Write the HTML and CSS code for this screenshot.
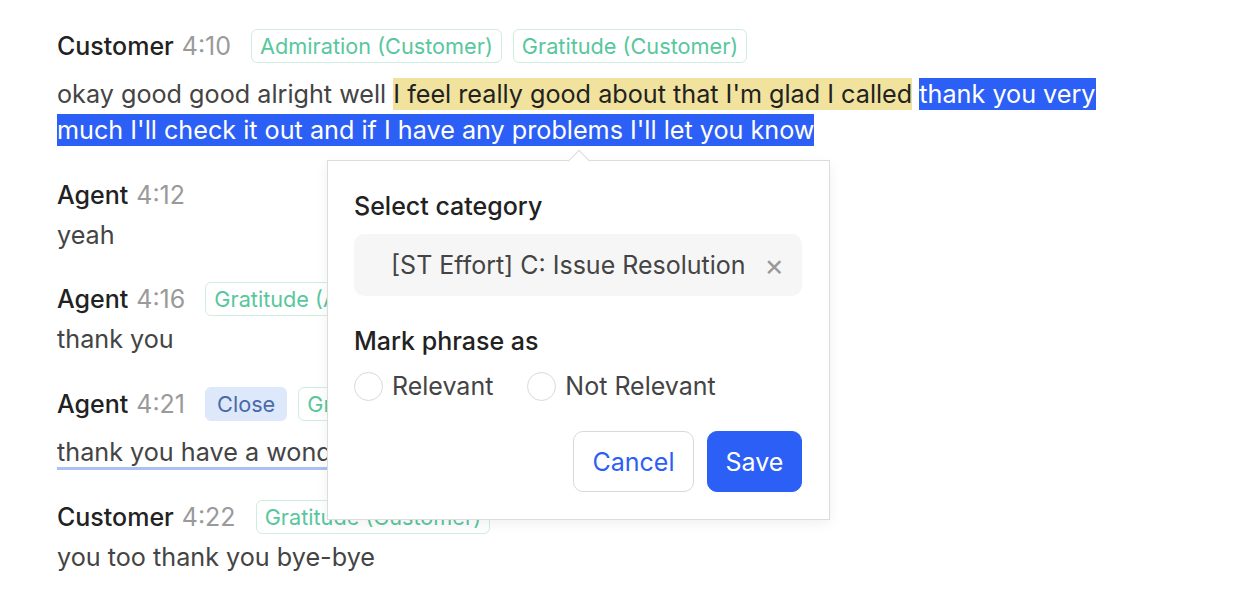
FILE: index.html
```html
<!DOCTYPE html>
<html>
<head>
<meta charset="utf-8">
<link rel="stylesheet" href="styles.css">
</head>
<body>
<div class="page">
  <div class="transcript">
    <div class="turn">
      <div class="head">
        <span class="who">Customer</span><span class="time">4:10</span>
        <span class="tags"><span class="tag">Admiration (Customer)</span><span class="tag">Gratitude (Customer)</span></span>
      </div>
      <p class="text marked">okay good good alright well <span class="hl">I feel really good about that I'm glad I called</span> <span class="sel">thank you very much I'll check it out and if I have any problems I'll let you know</span></p>
    </div>
    <div class="turn turn-plain">
      <div class="head"><span class="who">Agent</span><span class="time">4:12</span></div>
      <p class="text">yeah</p>
    </div>
    <div class="turn">
      <div class="head">
        <span class="who">Agent</span><span class="time">4:16</span>
        <span class="tags"><span class="tag">Gratitude (Agent)</span></span>
      </div>
      <p class="text">thank you</p>
    </div>
    <div class="turn">
      <div class="head">
        <span class="who">Agent</span><span class="time">4:21</span>
        <span class="tags"><span class="tag tag-close">Close</span><span class="tag">Gratitude (Agent)</span></span>
      </div>
      <p class="text marked"><span class="ul">thank you have a wonderful day</span></p>
    </div>
    <div class="turn">
      <div class="head">
        <span class="who">Customer</span><span class="time">4:22</span>
        <span class="tags"><span class="tag">Gratitude (Customer)</span></span>
      </div>
      <p class="text">you too thank you bye-bye</p>
    </div>
  </div>

  <div class="popover">
    <div class="field">
      <div class="label">Select category</div>
      <div class="select">
        <span class="select-value">[ST Effort] C: Issue Resolution</span>
        <span class="clear">×</span>
      </div>
    </div>
    <div class="field field-mark">
      <div class="label">Mark phrase as</div>
      <div class="radios">
        <label class="radio"><span class="dot"></span>Relevant</label>
        <label class="radio"><span class="dot"></span>Not Relevant</label>
      </div>
    </div>
    <div class="actions">
      <button class="btn btn-cancel">Cancel</button>
      <button class="btn btn-save">Save</button>
    </div>
  </div>
</div>
</body>
</html>
```

FILE: styles.css
```css
* { box-sizing: border-box; }
html, body { margin: 0; padding: 0; background: #fff; }
body {
  font-family: Inter, "Noto Sans", sans-serif;
  font-size: 25px;
  color: #444;
}
.page {
  position: relative;
  width: 1238px;
  height: 598px;
  overflow: hidden;
}
.transcript {
  padding: 28px 0 0 57px;
  width: 1137px;
}
.turn { margin-bottom: 29px; }
.turn-plain { margin-bottom: 28px; }
.head {
  display: flex;
  align-items: center;
  height: 36px;
}
.who { color: #222; font-weight: 500; }
.time { color: #9a9a9a; margin-left: 8px; }
.tags { display: flex; gap: 11px; margin-left: 20px; }
.tag {
  display: inline-flex;
  align-items: center;
  height: 34px;
  padding: 0 8px;
  border: 1px solid #cdeee0;
  border-radius: 6px;
  color: #58c79d;
  font-size: 21.7px;
}
.tag-close {
  background: #dde8fb;
  border-color: #dde8fb;
  color: #4a6aa8;
  padding: 0 11px;
}
.text {
  margin: 4px 0 0;
  line-height: 36px;
  font-size: 25.2px;
}
.text.marked { margin-top: 12px; }
.hl { background: #f1e29e; color: #222; padding: 1px 0; }
.sel { background: #2c5ff6; color: #fff; padding: 1px 0; }
.ul {
  border-bottom: 3px solid #aac1f1;
}

.popover {
  position: absolute;
  left: 327px;
  top: 160px;
  width: 503px;
  height: 360px;
  background: #fff;
  border: 1px solid #dcdcdc;
  box-shadow: 0 4px 12px rgba(0,0,0,0.06);
  padding: 29px 27px 27px 26px;
  display: flex;
  flex-direction: column;
}
.popover::before {
  content: "";
  position: absolute;
  top: -8px;
  left: 243px;
  width: 15px;
  height: 15px;
  background: #fff;
  border-top: 1px solid #dcdcdc;
  border-left: 1px solid #dcdcdc;
  transform: rotate(45deg);
}
.label {
  color: #222;
  font-weight: 500;
  line-height: 32px;
}
.select {
  margin-top: 12px;
  height: 62px;
  background: #f6f6f6;
  border-radius: 10px;
  display: flex;
  align-items: center;
  justify-content: space-between;
  padding: 0 18px 0 37px;
  color: #444;
}
.clear { color: #999; font-size: 30px; line-height: 1; }
.field-mark { margin-top: 29px; }
.radios { display: flex; gap: 34px; margin-top: 14px; }
.radio { display: flex; align-items: center; color: #444; gap: 9px; }
.dot {
  width: 29px; height: 29px;
  border: 1px solid #d9d9d9;
  border-radius: 50%;
  background: #fff;
}
.actions {
  margin-top: auto;
  display: flex;
  justify-content: flex-end;
  gap: 13px;
}
.btn {
  font-family: inherit;
  font-size: 25px;
  height: 61px;
  border-radius: 10px;
  padding: 0;
  cursor: pointer;
}
.btn-cancel { background: #fff; border: 1px solid #d9d9d9; color: #2c5ff6; width: 121px; }
.btn-save { background: #2c5ff6; border: 1px solid #2c5ff6; color: #fff; width: 95px; }
```
